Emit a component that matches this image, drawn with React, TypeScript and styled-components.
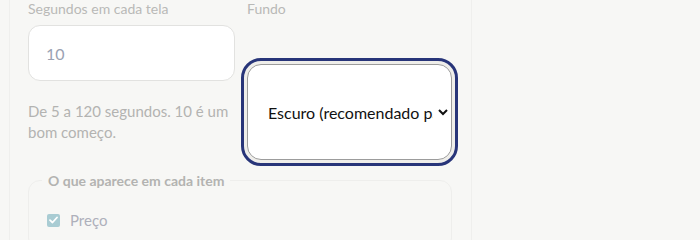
import React from "react";
import styled, { createGlobalStyle } from "styled-components";

const GlobalStyle = createGlobalStyle`
  body {
    margin: 0;
    background-color: #f7f7f5;
    font-family: Lato, "Noto Sans", sans-serif;
  }
`;

const Panel = styled.div`
  box-sizing: border-box;
  margin-left: 9px;
  width: 463px;
  min-height: 240px;
  padding: 0 19px 0 18px;
  border-left: 1px solid #efefed;
  border-right: 1px solid #efefed;
`;

const Grid = styled.div`
  display: grid;
  grid-template-columns: 207px 205px;
  column-gap: 12px;
`;

const Column = styled.div`
  display: flex;
  flex-direction: column;
`;

const Label = styled.label`
  font-size: 14px;
  line-height: 18px;
  color: #b9b9b7;
`;

const NumberInput = styled.input`
  box-sizing: border-box;
  margin-top: 7px;
  height: 56px;
  width: 100%;
  padding: 0 17px;
  border: 1px solid #e2e2e0;
  border-radius: 12px;
  background: #ffffff;
  font-family: inherit;
  font-size: 16px;
  color: #9aa2b3;
  outline: none;
`;

const Help = styled.p`
  margin: 20px 0 0;
  font-size: 15px;
  line-height: 21px;
  color: #b3b3b1;
`;

const Select = styled.select`
  box-sizing: border-box;
  margin-top: 46px;
  height: 96px;
  width: 100%;
  padding: 0 2px 0 16px;
  border: 1px solid #9c9c9c;
  border-radius: 14px;
  background: #ffffff;
  font-family: inherit;
  font-size: 16px;
  color: #111111;
  outline: 3px solid #283579;
  outline-offset: 3px;
  box-shadow: 0 0 0 3px #efeeea;
`;

const Group = styled.fieldset`
  margin: 12px 0 0;
  padding: 22px 18px 20px 13px;
  border: 1px solid #eeeeec;
  border-radius: 12px;
`;

const Legend = styled.legend`
  padding: 0 6px;
  font-size: 14px;
  font-weight: 700;
  color: #b3b3b1;
`;

const CheckRow = styled.label`
  display: flex;
  align-items: center;
  gap: 10px;
  padding-left: 5px;
  font-size: 15px;
  color: #aeb0bb;
`;

const CheckBox = styled.span`
  display: flex;
  align-items: center;
  justify-content: center;
  width: 13px;
  height: 13px;
  border-radius: 2px;
  background: #a9ccd3;
`;

export default function App() {
  return (
    <>
      <GlobalStyle />
      <Panel>
        <Grid>
          <Column>
            <Label>Segundos em cada tela</Label>
            <NumberInput type="text" defaultValue="10" />
            <Help>De 5 a 120 segundos. 10 é um bom começo.</Help>
          </Column>
          <Column>
            <Label>Fundo</Label>
            <Select defaultValue="escuro">
              <option value="escuro">Escuro (recomendado para TV)</option>
              <option value="claro">Claro</option>
            </Select>
          </Column>
        </Grid>
        <Group>
          <Legend>O que aparece em cada item</Legend>
          <CheckRow>
            <CheckBox>
              <svg width="9" height="8" viewBox="0 0 9 8">
                <path d="M1 4.2 L3.5 6.5 L8 1.5" fill="none" stroke="#ffffff" strokeWidth="1.8" strokeLinecap="round" strokeLinejoin="round" />
              </svg>
            </CheckBox>
            Preço
          </CheckRow>
        </Group>
      </Panel>
    </>
  );
}
